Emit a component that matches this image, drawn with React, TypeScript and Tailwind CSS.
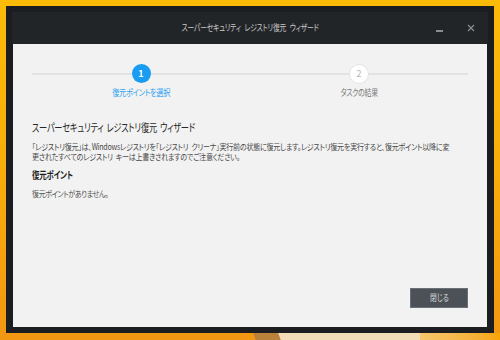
import React from "react";

const jp = "font-['Noto_Sans_CJK_JP','Noto_Sans',sans-serif] [font-feature-settings:'palt']";

export default function App() {
  return (
    <div className={`relative w-[500px] h-[340px] overflow-hidden bg-gradient-to-b from-[#fbbb08] via-[#f8ad0a] to-[#f29712] ${jp}`}>
      {/* desktop decoration at bottom */}
      <div className="absolute left-[255px] top-[333px] w-[30px] h-[10px] bg-[#b8823a] skew-x-[20deg]" />
      <div className="absolute left-[280px] top-[333px] w-[145px] h-[10px] bg-[#f3dcb8] skew-x-[20deg]" />
      <div className="absolute left-[420px] top-[333px] w-[80px] h-[10px] bg-gradient-to-r from-[#f6c76b] to-[#f7a600]" />

      <div className="absolute left-[6px] top-[6px] w-[488px] h-[327px] flex flex-col bg-[#1b1d20] px-[7px] pb-[6px]">
        {/* title bar */}
        <div className="relative h-[38px] -mx-[1px] pt-[6px]">
          <div className="relative h-[32px] bg-[#222528] flex items-start justify-center">
            <span className="inline-block whitespace-nowrap text-[9px] leading-[12px] mt-[10px] text-[#c9c9c9] tracking-[-0.3px] [word-spacing:3px] scale-x-[0.76] origin-center">スーパーセキュリティ レジストリ復元 ウィザード</span>
            <div className="absolute left-[424px] top-[18px] w-[7px] h-[2px] bg-[#8a8d90]" />
            <svg width="8" height="8" viewBox="0 0 8 8" className="absolute left-[455px] top-[12px]">
              <path d="M1 1L7 7M7 1L1 7" stroke="#8a8d90" strokeWidth="1.2" />
            </svg>
          </div>
        </div>
        {/* content */}
        <div className="flex-1 bg-[#f2f2f2] flex flex-col px-[19px] pt-[20px] pb-[19px]">
          {/* stepper */}
          <div className="relative">
            <div className="absolute left-0 right-0 top-[9px] h-[2px] bg-[#e2e2e2]" />
            <div className="relative grid grid-cols-2">
              <div className="flex flex-col items-center">
                <div className="w-[19px] h-[19px] rounded-full bg-[#1a9cf3] flex items-center justify-center text-white text-[9px] font-bold">1</div>
                <div className="mt-[4px] inline-block whitespace-nowrap text-[9px] leading-[12px] text-[#2a9ff0] tracking-[-0.4px] scale-x-[0.8] origin-center">復元ポイントを選択</div>
              </div>
              <div className="flex flex-col items-center">
                <div className="w-[20px] h-[20px] rounded-full bg-white border border-[#e4e4e4] flex items-center justify-center text-[#b5b5b5] text-[9px]">2</div>
                <div className="mt-[3px] inline-block whitespace-nowrap text-[9px] leading-[12px] text-[#777] tracking-[-0.4px] scale-x-[0.77] origin-center">タスクの結果</div>
              </div>
            </div>
          </div>

          <div className="mt-[20px] h-[16px] flex">
            <span className="whitespace-nowrap text-[11px] leading-[16px] text-[#262626] tracking-[-0.3px] [word-spacing:2px] scale-x-[0.745] origin-left">スーパーセキュリティ レジストリ復元 ウィザード</span>
          </div>
          <div className="mt-[6px] flex flex-col text-[8.5px] leading-[10px] text-[#4a4a4a] tracking-[-0.3px] [word-spacing:2px]">
            <span className="whitespace-nowrap scale-x-[0.83] origin-left">「レジストリ復元」は、Windowsレジストリを「レジストリ クリーナ」実行前の状態に復元します。レジストリ復元を実行すると、復元ポイント以降に変</span>
            <span className="whitespace-nowrap scale-x-[0.83] origin-left">更されたすべてのレジストリ キーは上書きされますのでご注意ください。</span>
          </div>
          <div className="mt-[7px] h-[14px] flex">
            <span className="whitespace-nowrap text-[10px] leading-[14px] font-bold text-[#1e1e1e] tracking-[-0.3px] scale-x-[0.75] origin-left">復元ポイント</span>
          </div>
          <div className="mt-[5px] h-[12px] flex">
            <span className="whitespace-nowrap text-[8.5px] leading-[12px] text-[#555] tracking-[-0.5px] scale-x-[0.83] origin-left">復元ポイントがありません。</span>
          </div>

          <div className="flex-1" />
          <div className="flex justify-end">
            <button className="w-[58px] h-[20px] bg-[#4b5157] border border-[#6a7076] text-[9px] text-[#d8d8d8] flex items-center justify-center">
              <span className="inline-block whitespace-nowrap scale-x-[0.75]">閉じる</span>
            </button>
          </div>
        </div>
      </div>
    </div>
  );
}
